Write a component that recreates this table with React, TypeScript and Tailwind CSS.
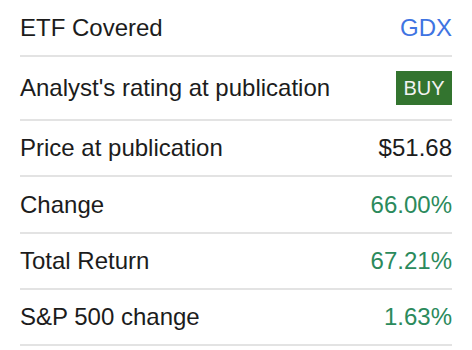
const rows: { label: string; value: string; kind: "link" | "badge" | "plain" | "up"; h: string }[] = [
  { label: "ETF Covered", value: "GDX", kind: "link", h: "h-[57px]" },
  { label: "Analyst's rating at publication", value: "BUY", kind: "badge", h: "h-[64px]" },
  { label: "Price at publication", value: "$51.68", kind: "plain", h: "h-[56px]" },
  { label: "Change", value: "66.00%", kind: "up", h: "h-[57px]" },
  { label: "Total Return", value: "67.21%", kind: "up", h: "h-[56px]" },
  { label: "S&P 500 change", value: "1.63%", kind: "up", h: "h-[56px]" },
];

function Value({ kind, value }: { kind: string; value: string }) {
  if (kind === "badge") {
    return (
      <span className="flex h-[34px] w-[56px] items-center justify-center bg-[#33742f] text-[20px] text-[#f2f2f2]">
        {value}
      </span>
    );
  }
  if (kind === "link") return <span className="text-[#3f74e2]">{value}</span>;
  if (kind === "up") return <span className="text-[#2b8a5c]">{value}</span>;
  return <span className="text-[#1c1c1c]">{value}</span>;
}

export default function App() {
  return (
    <div className="min-h-[350px] w-[472px] bg-white px-5 font-['Liberation_Sans',Arial,sans-serif] text-2xl">
      {rows.map((r) => (
        <div
          key={r.label}
          className={`flex items-center justify-between border-b-2 border-[#e3e3e3] ${r.h}`}
        >
          <span className="text-[#1c1c1c]">{r.label}</span>
          <Value kind={r.kind} value={r.value} />
        </div>
      ))}
    </div>
  );
}
